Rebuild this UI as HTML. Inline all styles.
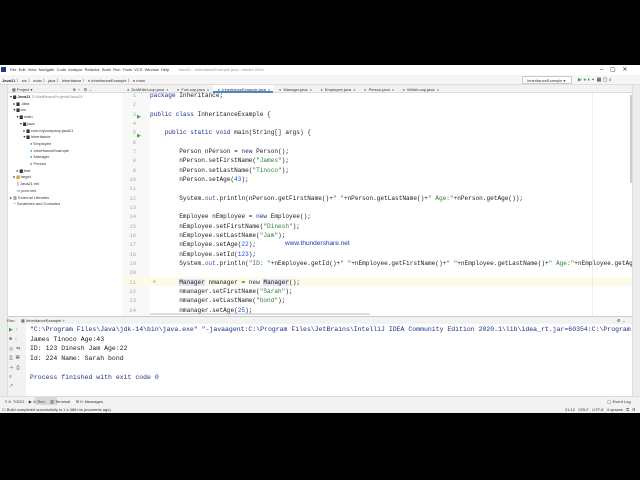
<!DOCTYPE html>
<html><head><meta charset="utf-8"><style>
*{margin:0;padding:0;box-sizing:border-box}
body{width:640px;height:480px;background:#000;position:relative;overflow:hidden;font-family:"Liberation Sans",sans-serif}
.a{position:absolute;white-space:pre}
.s{font-size:4px;color:#333}
.m{font-family:"Liberation Mono",monospace;font-size:6.1px;color:#1a1a1a;line-height:9.33px}
.k{color:#1c2d8f}.st{color:#2e7d32}.f{color:#6a3aa0}.n{color:#1750eb}
.ln{font-family:"Liberation Mono",monospace;font-size:5.5px;color:#a8a8a8;line-height:9.33px}
.t{font-size:4px;color:#333;line-height:6.7px}
</style></head><body>
<div class="a" style="left:0;top:65px;width:640px;height:348px;background:#f2f2f2"></div>
<div class="a" style="left:0;top:65px;width:640px;height:10px;background:#fff"></div>
<div class="a" style="left:1px;top:67px;width:5px;height:5px;background:#1e3a78"></div>
<div class="a s" style="left:10px;top:67px">File  Edit  View  Navigate  Code  Analyze  Refactor  Build  Run  Tools  VCS  Window  Help        <span style="color:#999">Java21 - InheritanceExample.java - IntelliJ IDEA</span></div>
<div class="a s" style="left:600px;top:66px;font-size:6px">–    ▢    ✕</div>
<div class="a" style="left:0;top:75px;width:640px;height:10px;background:#f5f5f5;border-bottom:1px solid #ddd"></div>
<div class="a s" style="left:2px;top:78px"><b>Java21</b> 〉 src 〉 main 〉 java 〉 Inheritance 〉 <span style="color:#3b7fc4">●</span> InheritanceExample 〉 <span style="color:#c33">●</span> main</div>
<div class="a" style="left:522px;top:76px;width:50px;height:8px;background:#fff;border:1px solid #ccc"></div>
<div class="a s" style="left:527px;top:78px">InheritanceExample ▾</div>
<div class="a s" style="left:578px;top:77px;font-size:5px"><span style="color:#4a4">▶</span> <span style="color:#4a4">●</span> ◐ ▪  ▦ ▢ ⌕</div>
<div class="a" style="left:0;top:85px;width:8px;height:318px;background:#ececec;border-right:1px solid #ddd"></div>
<div class="a" style="left:8px;top:85px;width:114px;height:231px;background:#fff"></div>
<div class="a" style="left:8px;top:85px;width:114px;height:8px;background:#f2f2f2;border-bottom:1px solid #ddd"></div>
<div class="a s" style="left:12px;top:87px">▦ Project ▾                                    ⊕  ÷   ⚙  –</div>
<div class="a t" style="left:10px;top:94px">▾ ▆ <b>Java21</b> <span style="color:#888">D:\NetBeansProjects\Java21</span>
   ▸ ▆ .idea
   ▾ ▆ src
      ▾ ▆ main
         ▾ ▆ java
            ▸ ▆ com.mycompany.java21
            ▾ ▆ Inheritance
                  <span style="color:#3b8fc4">●</span> Employee
                  <span style="color:#3b8fc4">●</span> InheritanceExample
                  <span style="color:#3b8fc4">●</span> Manager
                  <span style="color:#3b8fc4">●</span> Person
      ▸ ▆ test
   ▸ <span style="color:#d9a03a">▆</span> target
      ▯ Java21.iml
      <span style="color:#3b6fc4">m</span> pom.xml
▸ ▥ External Libraries
   ◔ Scratches and Consoles</div>
<div class="a" style="left:122px;top:85px;width:510px;height:8px;background:#f2f2f2;border-bottom:1px solid #ddd"></div>
<div class="a" style="left:213px;top:85px;width:60px;height:8px;background:#fff;border-bottom:2px solid #4a88c7"></div>
<div class="a s" style="left:127px;top:87px;word-spacing:1px"><span style="color:#3b8fc4">●</span> DoWhileLoop.java ×    <span style="color:#3b8fc4">●</span> ForLoop.java ×    <span style="color:#3b8fc4">●</span> InheritanceExample.java ×    <span style="color:#3b8fc4">●</span> Manager.java ×    <span style="color:#3b8fc4">●</span> Employee.java ×    <span style="color:#3b8fc4">●</span> Person.java ×    <span style="color:#3b8fc4">●</span> WhileLoop.java ×</div>
<div class="a" style="left:122px;top:93px;width:28px;height:223px;background:#f8f8f8"></div>
<div class="a" style="left:150px;top:93px;width:482px;height:223px;background:#fff"></div>
<div class="a" style="left:122px;top:277px;width:510px;height:9.3px;background:#fcfbe8"></div>
<div class="a" style="left:592px;top:93px;width:1px;height:223px;background:#eee"></div>
<div class="a" style="left:630px;top:95px;width:2px;height:88px;background:#ccc"></div>
<div class="a" style="left:150px;top:313px;width:220px;height:2px;background:#ddd"></div>
<div class="a ln" style="left:124px;top:91px;width:12px;text-align:right">1
2
3
4
5
6
7
8
9
10
11
12
13
14
15
16
17
18
19
20
21
22
23
24</div>
<div class="a" style="left:137px;top:108px;font-size:5px;color:#3a3;line-height:18.66px">▶<br>▶</div>
<div class="a" style="left:153px;top:279px;font-size:5px;color:#e6a817">●</div>
<div class="a" style="left:150px;top:91px;width:482px;height:224px;overflow:hidden">
<div class="a m" style="left:0;top:0"><span class="k">package</span> Inheritance;

<span class="k">public class</span> InheritanceExample {

    <span class="k">public static void</span> main(String[] args) {

        Person nPerson = <span class="k">new</span> Person();
        nPerson.setFirstName(<span class="st">"James"</span>);
        nPerson.setLastName(<span class="st">"Tinoco"</span>);
        nPerson.setAge(<span class="n">43</span>);

        System.<span class="f">out</span>.println(nPerson.getFirstName()+<span class="st">" "</span>+nPerson.getLastName()+<span class="st">" Age:"</span>+nPerson.getAge());

        Employee nEmployee = <span class="k">new</span> Employee();
        nEmployee.setFirstName(<span class="st">"Dinesh"</span>);
        nEmployee.setLastName(<span class="st">"Jam"</span>);
        nEmployee.setAge(<span class="n">22</span>);
        nEmployee.setId(<span class="n">123</span>);
        System.<span class="f">out</span>.println(<span class="st">"ID: "</span>+nEmployee.getId()+<span class="st">" "</span>+nEmployee.getFirstName()+<span class="st">" "</span>+nEmployee.getLastName()+<span class="st">" Age:"</span>+nEmployee.getAge());

        <span style="background:#e8e4f4">Manager</span> nmanager = <span class="k">new</span> <span style="background:#e8e4f4">Manager</span>();
        nmanager.setFirstName(<span class="st">"Sarah"</span>);
        nmanager.setLastName(<span class="st">"bond"</span>);
        nmanager.setAge(<span class="n">25</span>);</div></div>
<div class="a" style="left:285px;top:240px;font-size:6.5px;color:#2233bb">www.thundershare.net</div>
<div class="a" style="left:632px;top:85px;width:8px;height:318px;background:#ececec;border-left:1px solid #ddd"></div>
<div class="a" style="left:8px;top:316px;width:624px;height:8px;background:#f2f2f2;border-top:1px solid #ccc"></div>
<div class="a s" style="left:7px;top:318px">Run:     ▦ InheritanceExample ×</div>
<div class="a s" style="left:617px;top:318px">⚙  –</div>
<div class="a" style="left:8px;top:324px;width:18px;height:72px;background:#f2f2f2"></div>
<div class="a" style="left:26px;top:324px;width:606px;height:72px;background:#fff;overflow:hidden">
<div class="a m" style="left:4px;top:1px;line-height:9.5px;font-size:6.5px"><span class="k">"C:\Program Files\Java\jdk-14\bin\java.exe" "-javaagent:C:\Program Files\JetBrains\IntelliJ IDEA Community Edition 2020.1\lib\idea_rt.jar=60354:C:\Program Files\Jet</span>
James Tinoco Age:43
ID: 123 Dinesh Jam Age:22
Id: 224 Name: Sarah bond

<span class="k">Process finished with exit code 0</span></div></div>
<div class="a" style="left:9px;top:326px;font-size:5px;color:#777;line-height:9.4px;white-space:pre"><span style="color:#3a3">▶</span>  ↑
■  ↓
◎  ⇆
⎙  ▤
⇥  ⎙
≡
↗</div>
<div class="a" style="left:0;top:396px;width:640px;height:17px;background:#f2f2f2;border-top:1px solid #ddd"></div>
<div class="a" style="left:35px;top:397px;width:22px;height:8px;background:#d8d8d8"></div>
<div class="a s" style="left:5px;top:399px">≡ 6: TODO    ▶ 4: Run     ▥ Terminal     ✉ 0: Messages</div>
<div class="a s" style="left:607px;top:399px">◯ Event Log</div>
<div class="a s" style="left:2px;top:407px">☐ Build completed successfully in 1 s 488 ms (moments ago)</div>
<div class="a s" style="left:565px;top:407px">21:12   CRLF   UTF-8   4 spaces   ⚿   ▯</div>
</body></html>
